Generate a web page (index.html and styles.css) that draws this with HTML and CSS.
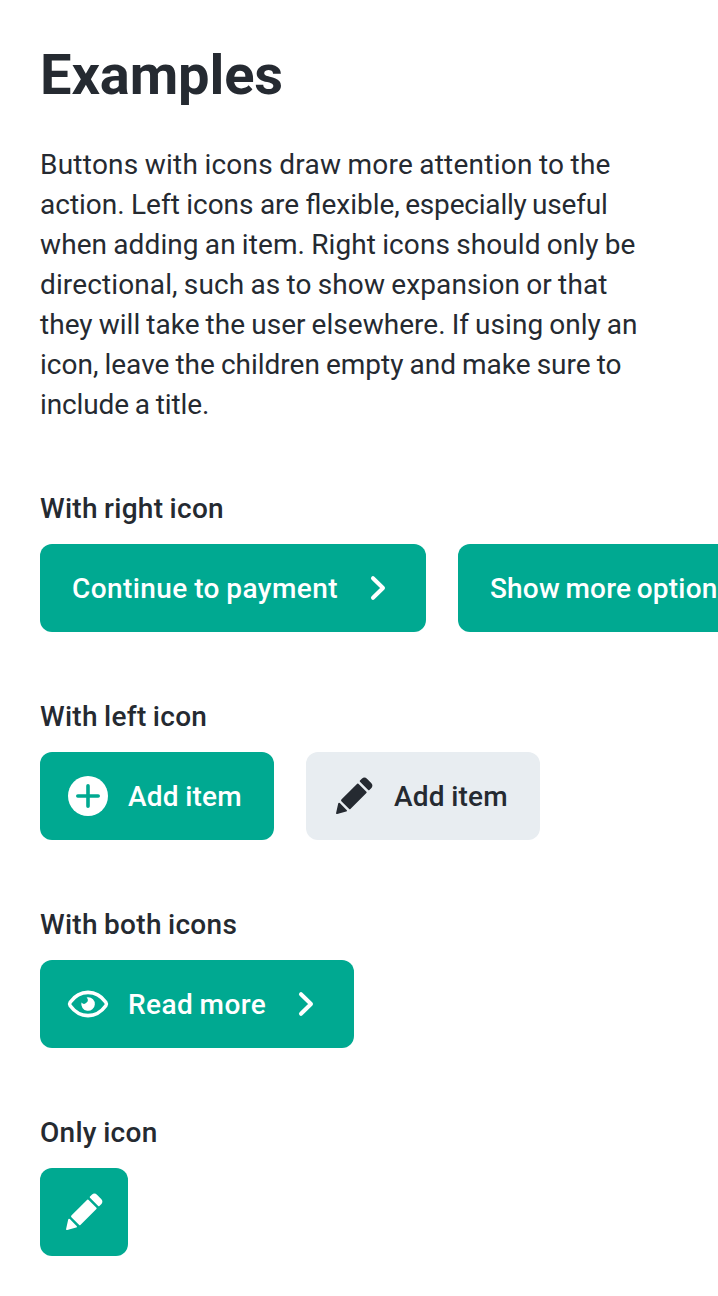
FILE: index.html
```html
<!DOCTYPE html>
<html lang="en">
<head>
<meta charset="utf-8">
<title>Examples</title>
<link rel="stylesheet" href="styles.css">
</head>
<body>
<svg class="sprite" aria-hidden="true">
<symbol id="chevron" viewBox="0 0 24 24"><path class="line" d="M9.500 7.100l5 4.900-5 4.900"/></symbol>
<symbol id="pencil" viewBox="0 0 24 24"><path fill="currentColor" d="M4.100 15.800q.25-.8.800-.25l3.400 3.400q.6.600-.2.800l-4.500 1.200q-.7.200-.55-.5zM5.700 14.600q-.4-.4 0-.8l7.900-7.900q.3-.3.600 0l4 4q.3.300 0 .6l-8 8q-.3.300-.6 0zM15 4.900q-.3-.3 0-.6l.9-.9q1.300-1.200 2.600 0l2.100 2.100q1.200 1.300 0 2.600l-.9.9q-.3.300-.6 0z"/></symbol>
</svg>
<main class="page">
<h1 class="title">Examples</h1>
<p class="intro">
<span class="ln ln-1">Buttons with icons draw more attention to the</span>
<span class="ln ln-2">action. Left icons are flexible,<span class="tight"> especially useful</span></span>
<span class="ln ln-3">when adding an item. Right icons should only be</span>
<span class="ln ln-4">directional, such as to show expansion or that</span>
<span class="ln ln-5">they will take the user elsewhere. If using only an</span>
<span class="ln ln-6">icon, leave the children empty and make sure to</span>
<span class="ln ln-7">include a title.</span>
</p>
<section class="example">
<h2 class="label">With right icon</h2>
<div class="row">
<button class="btn btn-right wide">Continue to payment<svg class="icon"><use href="#chevron"/></svg></button>
<button class="btn btn-right narrow">Show more options<svg class="icon"><use href="#chevron"/></svg></button>
</div>
</section>
<section class="example">
<h2 class="label">With left icon</h2>
<div class="row">
<button class="btn btn-left"><svg class="icon" viewBox="0 0 24 24"><circle cx="12" cy="12" r="10" fill="currentColor"/><path class="plus" d="M12 6.900v10.200M6.900 12h10.200"/></svg>Add item</button>
<button class="btn btn-left btn-grey"><svg class="icon"><use href="#pencil"/></svg>Add item</button>
</div>
</section>
<section class="example">
<h2 class="label">With both icons</h2>
<div class="row">
<button class="btn btn-left btn-right wide"><svg class="icon" viewBox="0 0 24 24"><path class="lid" d="M3.100 12.900Q2.500 12 3.100 11.100C5 8.500 8.200 6.200 12 6.200S19 8.500 20.900 11.100Q21.500 12 20.900 12.900C19 15.500 15.800 17.800 12 17.800S5 15.500 3.100 12.900z"/><path fill="currentColor" d="M12 8.600a3.400 3.400 0 1 1-3.300 2.700a1.800 1.800 0 1 0 2.600-2.600q.3-.1.700-.1z"/></svg>Read more<svg class="icon"><use href="#chevron"/></svg></button>
</div>
</section>
<section class="example">
<h2 class="label">Only icon</h2>
<div class="row">
<button class="btn btn-only" title="Edit"><svg class="icon"><use href="#pencil"/></svg></button>
</div>
</section>
</main>
</body>
</html>
```

FILE: styles.css
```css
body {
  margin: 0;
  height: 1296px;
  background: #fff;
  color: #252a31;
  font-family: Roboto, "Liberation Sans", sans-serif;
  overflow: hidden;
}
.sprite { display: none; }
.page { padding: 41px 40px 40px; }
.title { margin: 0 0 36px; font-size: 56px; line-height: 68px; font-weight: 700; letter-spacing: -0.1px; }
.intro { margin: 0 0 64px; font-size: 28px; line-height: 40px; }
.ln { display: block; white-space: nowrap; word-spacing: -0.93px; }
.ln-1 { letter-spacing: 0.24px; }
.ln-2 { word-spacing: -0.6px; }
.tight { word-spacing: -1.4px; letter-spacing: -0.2px; }
.ln-3 { letter-spacing: 0.1px; }
.ln-4 { letter-spacing: 0.12px; }
.ln-5 { letter-spacing: 0.03px; }
.ln-6 { word-spacing: -0.9px; }
.ln-7 { letter-spacing: -0.13px; }
.example { margin-bottom: 65px; }
.example:last-child { margin-bottom: 0; }
.label { margin: 0 0 15px; font-size: 28px; line-height: 40px; font-weight: 500; letter-spacing: 0.28px; word-spacing: -0.93px; }
.row { display: flex; gap: 32px; }
.btn {
  display: flex;
  flex: none;
  align-items: center;
  height: 88px;
  border: 0;
  border-radius: 12px;
  padding: 0 32px;
  background: #00a991;
  color: #fff;
  font: inherit;
  font-size: 28px;
  font-weight: 500;
  letter-spacing: 0.25px;
  word-spacing: -0.93px;
  white-space: nowrap;
  gap: 16px;
}
.wide { letter-spacing: 0.42px; }
.narrow { letter-spacing: 0.2px; word-spacing: -1.6px; }
.btn-left { padding-left: 24px; }
.btn-right { padding-right: 24px; }
.btn-only { padding: 0 20px; }
.btn-grey { background: #e8edf1; color: #252a31; }
.icon { width: 48px; height: 48px; flex: none; }
.line { fill: none; stroke: currentColor; stroke-width: 2; stroke-linecap: round; stroke-linejoin: round; }
.plus { fill: none; stroke: #00a991; stroke-width: 1.8; stroke-linecap: round; }
.lid { fill: none; stroke: currentColor; stroke-width: 1.8; stroke-linejoin: round; }
```
